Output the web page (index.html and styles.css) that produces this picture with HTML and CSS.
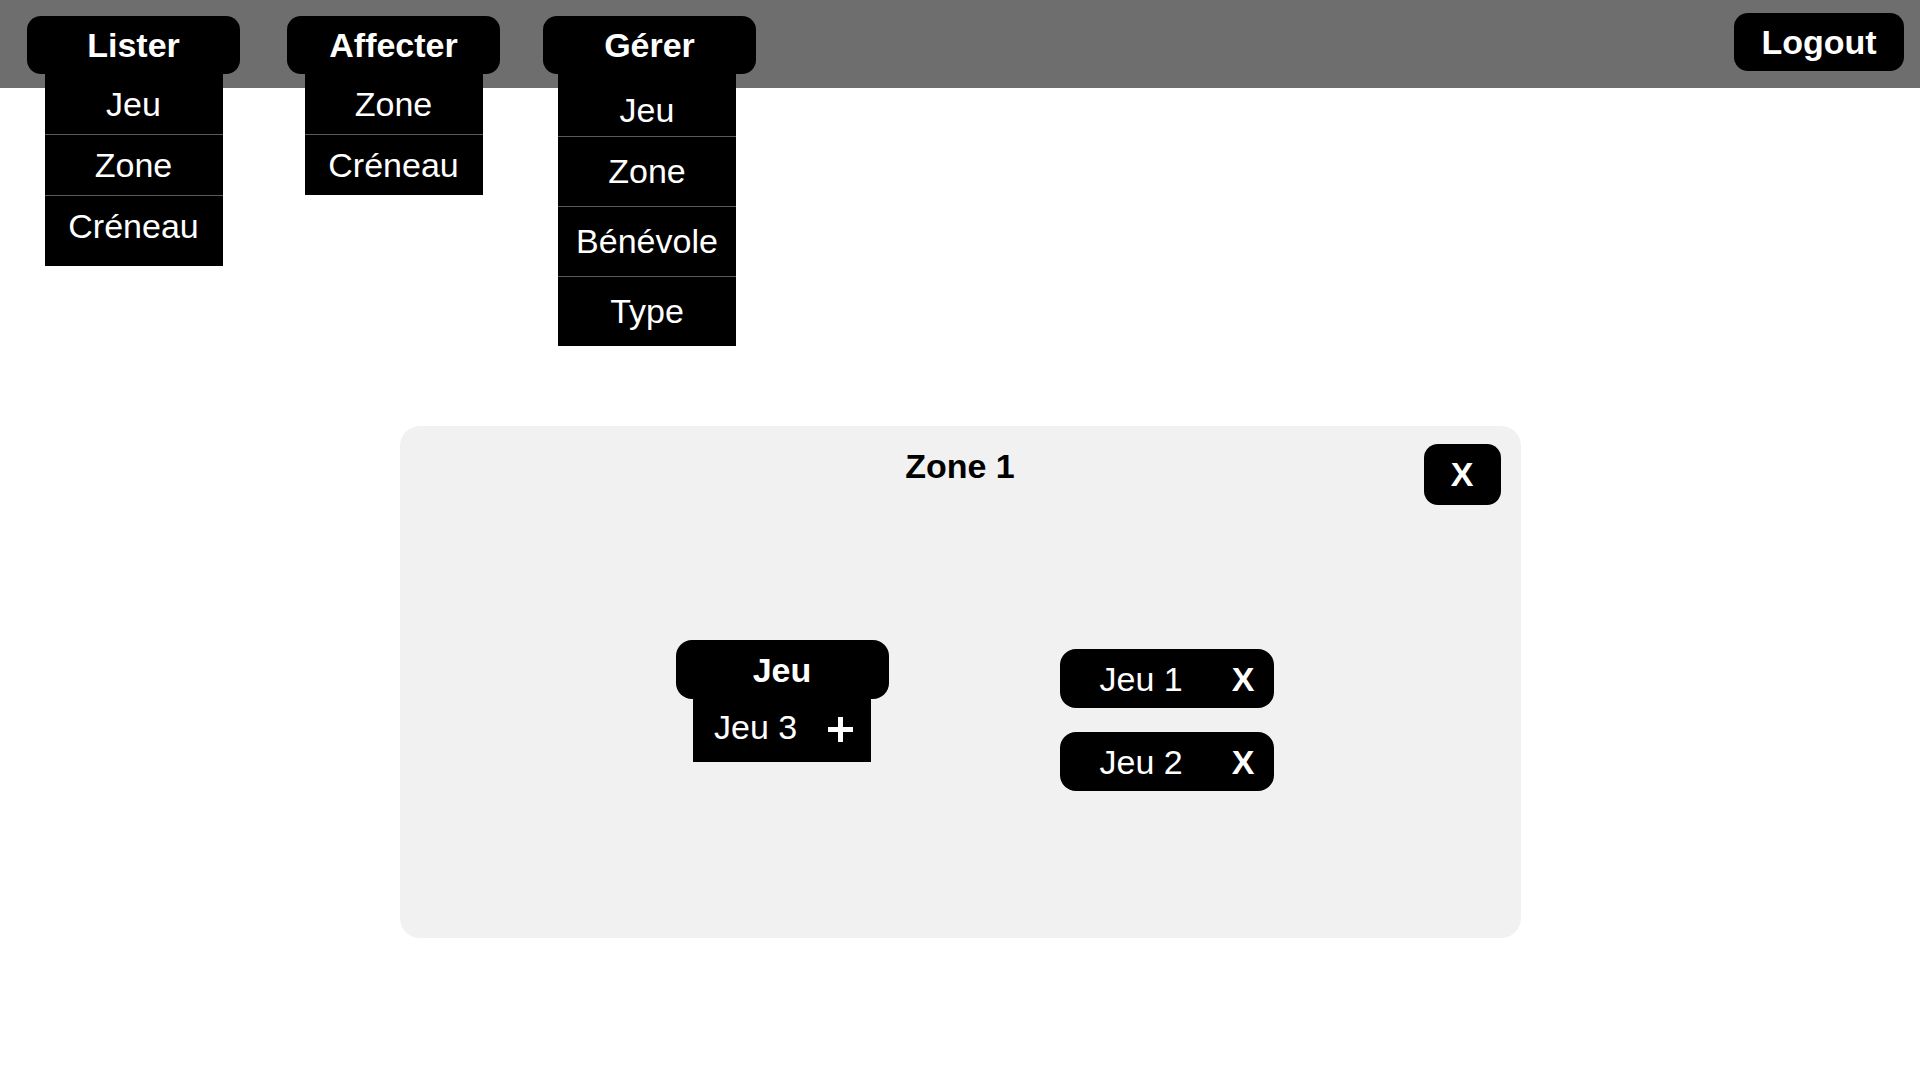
FILE: index.html
```html
<!DOCTYPE html>
<html lang="fr">
<head>
<meta charset="utf-8">
<title>Zone 1</title>
<link rel="stylesheet" href="styles.css">
</head>
<body>
<header class="topbar">
  <nav class="nav">
    <div class="menu">
      <div class="menu-btn">Lister</div>
      <ul class="menu-list menu-list-lister">
        <li>Jeu</li>
        <li>Zone</li>
        <li>Créneau</li>
      </ul>
    </div>
    <div class="menu">
      <div class="menu-btn">Affecter</div>
      <ul class="menu-list menu-list-affecter">
        <li>Zone</li>
        <li>Créneau</li>
      </ul>
    </div>
    <div class="menu menu-gerer">
      <div class="menu-btn">Gérer</div>
      <ul class="menu-list menu-list-tall">
        <li>Jeu</li>
        <li>Zone</li>
        <li>Bénévole</li>
        <li>Type</li>
      </ul>
    </div>
  </nav>
  <div class="logout">Logout</div>
</header>

<main class="modal">
  <div class="modal-head">
    <span></span>
    <h1 class="modal-title">Zone 1</h1>
    <div class="close-btn">X</div>
  </div>
  <div class="modal-body">
    <div class="menu">
      <div class="menu-btn menu-btn-jeu">Jeu</div>
      <div class="add-item">
        <span>Jeu 3</span>
        <svg class="plus" width="25" height="25" viewBox="0 0 25 25"><rect x="0" y="10" width="25" height="5" fill="#fff"/><rect x="10" y="0" width="5" height="25" fill="#fff"/></svg>
      </div>
    </div>
    <div class="pills">
      <div class="pill"><span class="pill-label">Jeu 1</span><span class="pill-x">X</span></div>
      <div class="pill"><span class="pill-label">Jeu 2</span><span class="pill-x">X</span></div>
    </div>
  </div>
</main>
</body>
</html>
```

FILE: styles.css
```css
* { box-sizing: border-box; }

body {
  margin: 0;
  background: #ffffff;
  font-family: "Liberation Sans", Arial, Helvetica, sans-serif;
  font-size: 34px;
  color: #000;
}

.topbar {
  height: 88px;
  background: #6e6e6e;
  display: flex;
  align-items: flex-start;
  padding: 13px 16px 0 27px;
}

.nav {
  display: flex;
  align-items: flex-start;
  gap: 47px;
  margin-top: 3px;
}

.menu {
  width: 213px;
  display: flex;
  flex-direction: column;
  align-items: center;
}

.menu-gerer {
  margin-left: -4px;
}

.menu-btn {
  width: 100%;
  height: 58px;
  line-height: 58px;
  border-radius: 14px;
  background: #000;
  color: #fff;
  font-weight: bold;
  text-align: center;
}

.menu-list {
  list-style: none;
  margin: 0;
  padding: 0;
  width: 178px;
  background: #000;
  color: #fff;
  text-align: center;
  position: relative;
  z-index: 2;
}

.menu-list li {
  line-height: 60px;
  height: 60px;
}

.menu-list li + li {
  border-top: 1px solid #5a5a5a;
  height: 61px;
}

.menu-list-lister li:last-child {
  height: 71px;
}

.menu-list-tall {
  align-self: flex-start;
  margin-left: 15px;
}

.menu-list-tall li {
  line-height: 72px;
  height: 62px;
}

.menu-list-tall li + li {
  line-height: 69px;
  height: 70px;
}

.logout {
  margin-left: auto;
  width: 170px;
  height: 58px;
  line-height: 58px;
  border-radius: 14px;
  background: #000;
  color: #fff;
  font-weight: bold;
  text-align: center;
}

.modal {
  width: 1121px;
  height: 512px;
  margin: 338px auto 0;
  background: #f1f1f1;
  border-radius: 20px;
  padding: 18px 20px 0 20px;
}

.modal-head {
  display: grid;
  grid-template-columns: 1fr auto 1fr;
  align-items: start;
}

.modal-title {
  margin: 2px 0 0;
  font-size: 34px;
  font-weight: bold;
  line-height: 40px;
  text-align: center;
}

.close-btn {
  justify-self: end;
  width: 77px;
  height: 61px;
  line-height: 61px;
  border-radius: 14px;
  background: #000;
  color: #fff;
  font-weight: bold;
  text-align: center;
}

.modal-body {
  display: flex;
  align-items: flex-start;
  gap: 171px;
  margin-top: 135px;
  padding-left: 256px;
}

.menu-btn-jeu {
  height: 59px;
  line-height: 61px;
  border-radius: 16px;
}

.add-item {
  width: 178px;
  height: 63px;
  background: #000;
  color: #fff;
  display: flex;
  align-items: flex-start;
  padding-left: 21px;
  line-height: 56px;
}

.plus {
  margin-left: 31px;
  margin-top: 18px;
}

.pills {
  display: flex;
  flex-direction: column;
  gap: 24px;
  margin-top: 9px;
}

.pill {
  width: 214px;
  height: 59px;
  line-height: 61px;
  border-radius: 16px;
  background: #000;
  color: #fff;
  display: flex;
  padding-left: 40px;
}

.pill-x {
  font-weight: bold;
  margin-left: 49px;
}
```
